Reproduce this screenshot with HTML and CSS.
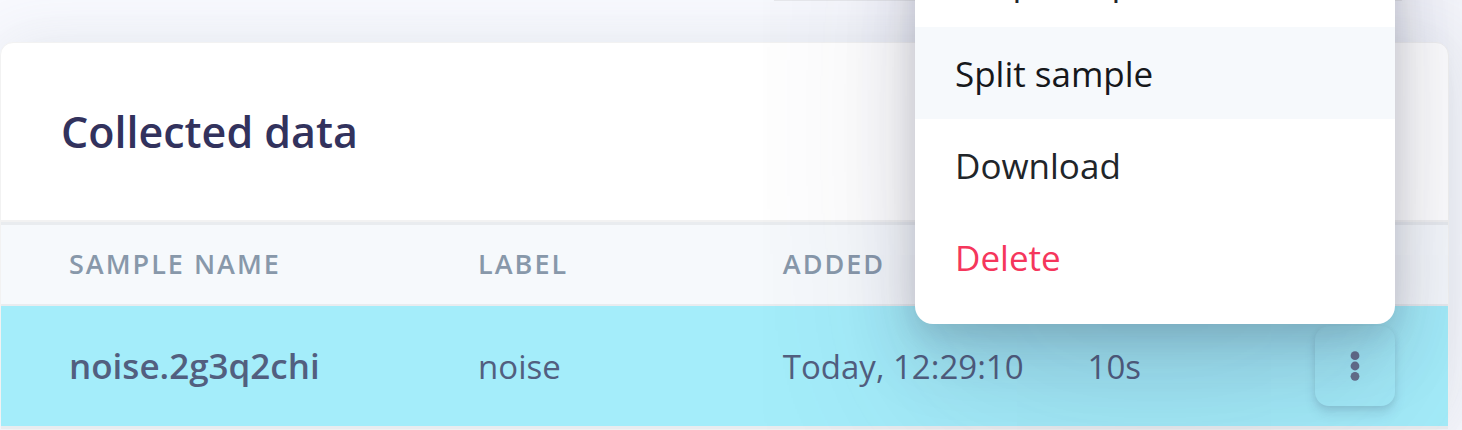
FILE: index.html
```html
<!DOCTYPE html>
<html lang="en">
<head>
<meta charset="utf-8">
<title>Collected data</title>
<link rel="stylesheet" href="styles.css">
</head>
<body>
<div class="summary"><div class="summary-card"></div></div>
<main class="card">
  <header class="card-header"><h3 class="card-title">Collected data</h3></header>
  <table class="samples">
    <colgroup><col class="col-name"><col class="col-label"><col class="col-added"><col></colgroup>
    <thead>
      <tr><th scope="col">SAMPLE NAME</th><th scope="col">LABEL</th><th scope="col">ADDED</th><td></td></tr>
    </thead>
    <tbody>
      <tr>
        <th scope="row">noise.2g3q2chi</th>
        <td>noise</td>
        <td>Today, 12:29:10</td>
        <td>
          <div class="length-actions">
            <span>10s</span>
            <div class="dropdown">
              <button class="menu-toggle" type="button" aria-label="Sample actions" aria-expanded="true">
                <svg class="dots" viewBox="0 0 10 30" aria-hidden="true"><circle cx="5" cy="4.7" r="4.4"/><circle cx="5" cy="15" r="4.4"/><circle cx="5" cy="25.3" r="4.4"/></svg>
              </button>
              <div class="menu">
                <button class="menu-item" type="button">Crop sample</button>
                <button class="menu-item active" type="button">Split sample</button>
                <button class="menu-item" type="button">Download</button>
                <button class="menu-item danger" type="button">Delete</button>
              </div>
            </div>
          </div>
        </td>
      </tr>
    </tbody>
  </table>
</main>
</body>
</html>
```
FILE: styles.css
```css
* { box-sizing: border-box; }

body {
  margin: 0;
  overflow: hidden;
  background: #f8f9fe;
  font-family: "Open Sans", "Noto Sans", sans-serif;
  color: #525f7f;
}

.summary { padding: 0 60px 0 774px; }

.summary-card { border-bottom: 1px solid #e9e9ed; }

.card {
  margin: 41px 13px 0 0;
  background: #fff;
  border: 1px solid #f2f2f2;
  border-radius: 13px;
  box-shadow: 0 0 64px rgba(136, 152, 170, 0.15), 0 0 64px rgba(80, 80, 90, 0.02);
}

.card-header {
  padding: 60px 60px 59px;
  border-bottom: 2px solid rgba(0, 0, 0, 0.05);
}

.card-title {
  margin: 0;
  font-size: 43px;
  line-height: 58px;
  font-weight: 600;
  color: #32325d;
}

.samples {
  width: 100%;
  table-layout: fixed;
  border-collapse: separate;
  border-spacing: 0;
}

.col-name { width: 28.27%; }
.col-label, .col-added { width: 21.06%; }

.samples th, .samples td {
  padding: 0 0 0 68px;
  text-align: left;
  font-weight: 400;
  white-space: nowrap;
}

.samples thead th, .samples thead td {
  height: 84px;
  padding-bottom: 2px;
  background: #f6f9fc;
  border-top: 3px solid #e9ecef;
  border-bottom: 2px solid #e9ecef;
  color: #8898aa;
  font-size: 27px;
  font-weight: 600;
  letter-spacing: 2px;
}

.samples tbody th, .samples tbody td {
  height: 123px;
  background: #a4edfa;
  border-bottom: 3px solid #e9ecef;
  font-size: 33px;
}

.samples tbody th { padding-bottom: 2px; font-size: 35px; font-weight: 600; }

.length-actions {
  display: flex;
  align-items: center;
  justify-content: space-between;
  padding-right: 53px;
}

.dropdown { position: relative; }

.menu-toggle {
  display: flex;
  align-items: center;
  justify-content: center;
  width: 80px;
  height: 80px;
  padding: 0;
  background: #a4edfa;
  border: 0;
  border-radius: 14px;
  box-shadow: 0 8px 12px rgba(50, 50, 93, 0.11), 0 2px 6px rgba(0, 0, 0, 0.08);
}

.dots { width: 10px; height: 30px; fill: #66718e; }

.menu {
  position: absolute;
  right: 0;
  bottom: calc(100% + 2px);
  width: 480px;
  padding: 400px 0 21px;
  background: #fff;
  border-radius: 18px;
  box-shadow: 0 100px 200px rgba(50, 50, 93, 0.12), 0 30px 70px rgba(50, 50, 83, 0.2), 0 10px 30px rgba(0, 0, 0, 0.1);
}

.menu-item {
  display: block;
  width: 100%;
  height: 92px;
  padding: 2px 40px 0;
  background: none;
  border: 0;
  font: 400 35px/54px "Open Sans", "Noto Sans", sans-serif;
  text-align: left;
  color: #212529;
}

.menu-item.active { background: #f6f9fc; color: #16181b; }
.menu-item.danger { color: #f5365c; }
```
